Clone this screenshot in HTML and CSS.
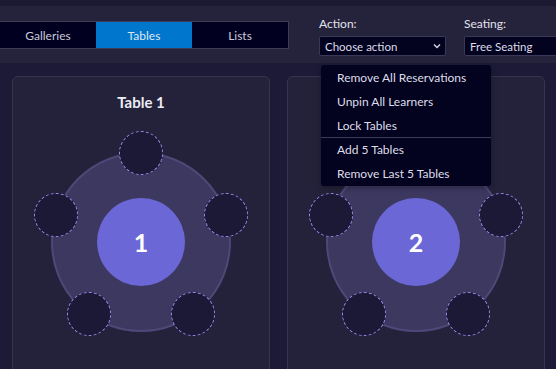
FILE: index.html
```html
<!DOCTYPE html>
<html>
<head>
<meta charset="utf-8">
<link rel="stylesheet" href="styles.css">
</head>
<body>
<div class="topstrip"></div>
<header class="header">
  <nav class="tabs">
    <div class="tab">Galleries</div>
    <div class="tab active">Tables</div>
    <div class="tab">Lists</div>
  </nav>
  <div class="divider"></div>
  <div class="controls">
    <div class="field field-action">
      <label class="label">Action:</label>
      <div class="select">
        <span>Choose action</span>
        <svg class="chev" width="8" height="6" viewBox="0 0 8 6"><path d="M1 1.5 L4 4.5 L7 1.5" fill="none" stroke="#d8d8e6" stroke-width="1.4"/></svg>
      </div>
    </div>
    <div class="field field-seating">
      <label class="label">Seating:</label>
      <div class="select select-wide"><span>Free Seating</span></div>
    </div>
  </div>
</header>
<main class="main">
  <section class="card">
    <h2 class="card-title">Table 1</h2>
    <div class="diagram">
      <div class="ring"></div>
      <div class="hub">1</div>
      <div class="seat" style="left:88px;top:-1px"></div>
      <div class="seat" style="left:172.6px;top:60.5px"></div>
      <div class="seat" style="left:140.3px;top:160px"></div>
      <div class="seat" style="left:35.7px;top:160px"></div>
      <div class="seat" style="left:3.4px;top:60.5px"></div>
    </div>
  </section>
  <section class="card">
    <h2 class="card-title">Table 2</h2>
    <div class="diagram">
      <div class="ring"></div>
      <div class="hub">2</div>
      <div class="seat" style="left:88px;top:-1px"></div>
      <div class="seat" style="left:172.6px;top:60.5px"></div>
      <div class="seat" style="left:140.3px;top:160px"></div>
      <div class="seat" style="left:35.7px;top:160px"></div>
      <div class="seat" style="left:3.4px;top:60.5px"></div>
    </div>
  </section>
</main>
<ul class="menu">
  <li class="item">Remove All Reservations</li>
  <li class="item">Unpin All Learners</li>
  <li class="item">Lock Tables</li>
  <li class="sep"></li>
  <li class="item">Add 5 Tables</li>
  <li class="item">Remove Last 5 Tables</li>
</ul>
</body>
</html>
```
FILE: styles.css
```css
* { box-sizing: border-box; }
html, body {
  margin: 0;
  padding: 0;
  width: 556px;
  height: 369px;
  overflow: hidden;
  background: #1c1a36;
  font-family: "Lato", "Noto Sans", sans-serif;
  color: #e2e2ec;
}
.topstrip {
  height: 6px;
  background: #1c1a33;
}
.header {
  height: 57px;
  background: #25233b;
  display: flex;
  align-items: stretch;
}
.tabs {
  display: flex;
  margin-left: -1px;
  margin-top: 15px;
  height: 28px;
  border: 1px solid #3d3b57;
  background: #010020;
}
.tab {
  width: 96px;
  display: flex;
  align-items: center;
  justify-content: center;
  font-size: 12px;
  color: #c9c9d8;
}
.tab.active {
  background: #0077cc;
  color: #dfe6f2;
}
.divider {
  width: 1px;
  background: #34324d;
  margin-left: 14px;
}
.controls {
  display: flex;
  gap: 18px;
  padding-left: 16px;
  padding-top: 10px;
}
.field {
  display: flex;
  flex-direction: column;
  gap: 5px;
}
.label {
  font-size: 12px;
  line-height: 15px;
  color: #e2e2ec;
}
.select {
  height: 20px;
  width: 127px;
  background: #03021f;
  border: 1px solid #3a3856;
  border-radius: 2px;
  display: flex;
  align-items: center;
  justify-content: space-between;
  padding: 0 4px 0 5px;
  font-size: 11.5px;
  color: #dcdce8;
}
.select-wide { width: 120px; }
.chev { display: block; }
.main {
  display: flex;
  gap: 17px;
  padding: 13px 0 0 12px;
}
.card {
  width: 258px;
  height: 320px;
  flex: none;
  background: #24223a;
  border: 1px solid #36344f;
  border-radius: 6px;
  padding-top: 15px;
  display: flex;
  flex-direction: column;
  align-items: center;
}
.card-title {
  margin: 0;
  font-size: 15px;
  font-weight: 700;
  line-height: 20px;
  color: #ececf4;
}
.diagram {
  position: relative;
  width: 220px;
  height: 220px;
  margin-top: 20px;
}
.ring {
  position: absolute;
  left: 20px;
  top: 20px;
  width: 180px;
  height: 180px;
  border-radius: 50%;
  background: #3c3860;
  border: 2px solid #4d4878;
}
.hub {
  position: absolute;
  left: 66px;
  top: 66px;
  width: 88px;
  height: 88px;
  border-radius: 50%;
  background: #6b67d6;
  display: flex;
  align-items: center;
  justify-content: center;
  font-size: 25px;
  font-weight: 700;
  color: #ffffff;
}
.seat {
  position: absolute;
  width: 44px;
  height: 44px;
  border-radius: 50%;
  background: #1b1935;
  border: 1px dashed #958ef0;
}
.menu {
  position: absolute;
  left: 321px;
  top: 65px;
  width: 170px;
  margin: 0;
  padding: 0;
  list-style: none;
  background: #03021f;
  border-radius: 3px;
  box-shadow: 0 2px 6px rgba(0,0,0,0.3);
}
.item {
  height: 24px;
  display: flex;
  align-items: center;
  padding-left: 16px;
  font-size: 12px;
  color: #dedee8;
}
.sep {
  height: 1px;
  background: #3b3a58;
  margin-top: -0.5px;
}
```
